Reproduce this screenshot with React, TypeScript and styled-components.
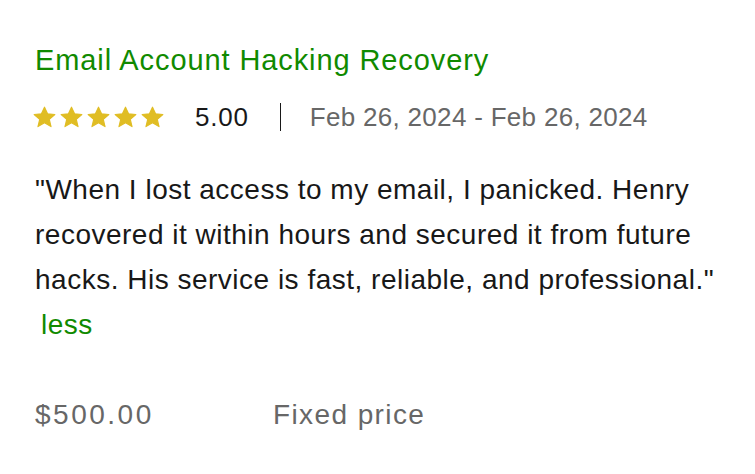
import React from 'react'
import styled, { createGlobalStyle } from 'styled-components'

const GlobalStyle = createGlobalStyle`
  body {
    margin: 0;
    background: #ffffff;
    font-family: 'Liberation Sans', Arial, sans-serif;
  }
`

const Card = styled.div`
  padding: 42px 20px 0 35px;
  display: flex;
  flex-direction: column;
`

const Title = styled.h3`
  margin: 0;
  font-size: 29px;
  font-weight: 400;
  line-height: 36px;
  letter-spacing: 0.9px;
  color: #108a00;
`

const MetaRow = styled.div`
  display: flex;
  align-items: center;
  margin-top: 24px;
  height: 30px;
`

const Stars = styled.div`
  display: flex;
  gap: 4px;
  margin-left: -2px;
`

const Rating = styled.span`
  font-size: 26px;
  letter-spacing: 0.8px;
  color: #181818;
  margin-left: 31px;
`

const Divider = styled.span`
  width: 1px;
  height: 28px;
  background: #181818;
  margin: 0 29px 0 31px;
`

const Dates = styled.span`
  font-size: 26px;
  letter-spacing: 0.3px;
  color: #676767;
`

const Quote = styled.p`
  margin: 35px 0 0 0;
  max-width: 692px;
  font-size: 28px;
  line-height: 45px;
  color: #181818;
  letter-spacing: 0.5px;
`

const LessLink = styled.span`
  display: block;
  color: #108a00;
  padding-left: 6px;
`

const PriceRow = styled.div`
  display: flex;
  align-items: baseline;
  margin-top: 50px;
  font-size: 28px;
  line-height: 36px;
  color: #676767;
`

const Price = styled.span<{ $spacing: number; $width?: number }>`
  letter-spacing: ${({ $spacing }) => $spacing}px;
  width: ${({ $width }) => ($width ? `${$width}px` : 'auto')};
`

const Star = () => (
  <svg width="23" height="23" viewBox="0 0 24 24">
    <path
      d="M12 1.2l3.2 7 7.6.7-5.8 5.1 1.8 7.5L12 17.6l-6.8 3.9 1.8-7.5-5.8-5.1 7.6-.7z"
      fill="#e0bd24"
      stroke="#e0bd24"
      strokeWidth="1.2"
      strokeLinejoin="round"
    />
  </svg>
)

export default function App() {
  return (
    <>
      <GlobalStyle />
      <Card>
        <Title>Email Account Hacking Recovery</Title>
        <MetaRow>
          <Stars>
            {[0, 1, 2, 3, 4].map(i => (
              <Star key={i} />
            ))}
          </Stars>
          <Rating>5.00</Rating>
          <Divider />
          <Dates>Feb 26, 2024 - Feb 26, 2024</Dates>
        </MetaRow>
        <Quote>
          "When I lost access to my email, I panicked. Henry recovered it within hours and secured it
          from future hacks. His service is fast, reliable, and professional."
          <LessLink>less</LessLink>
        </Quote>
        <PriceRow>
          <Price $spacing={2.5} $width={238}>$500.00</Price>
          <Price $spacing={1.4}>Fixed price</Price>
        </PriceRow>
      </Card>
    </>
  )
}
